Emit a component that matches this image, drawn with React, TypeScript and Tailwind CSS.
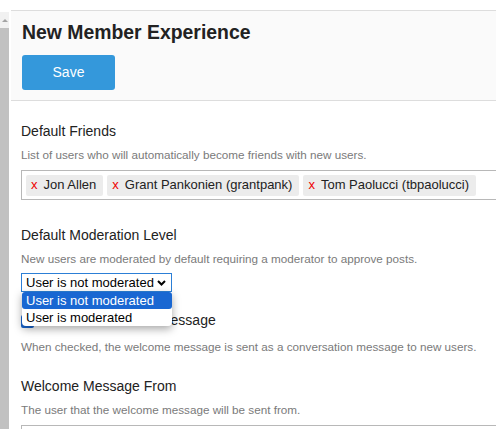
import React from "react";

const friends = ["Jon Allen", "Grant Pankonien (grantpank)", "Tom Paolucci (tbpaolucci)"];

function Heading({ children }: { children: React.ReactNode }) {
  return <div className="text-[14px] leading-[17px] text-[#222]">{children}</div>;
}

function Desc({ children, className = "mt-[8px]" }: { children: React.ReactNode; className?: string }) {
  return (
    <div className={`${className} whitespace-nowrap text-[11.7px] leading-[14px] text-[#7a7a7a]`}>{children}</div>
  );
}

export default function App() {
  return (
    <div className="flex h-[429px] w-[496px] overflow-hidden bg-white font-['Liberation_Sans',Arial,sans-serif]">
      {/* scrollbar */}
      <div className="flex w-[9px] shrink-0 flex-col pt-[12px]">
        <div className="flex h-[16px] items-center justify-center bg-[#f1f1f1]">
          <div className="h-0 w-0 border-x-[3px] border-b-[3px] border-x-transparent border-b-[#a3a3a3]" />
        </div>
        <div className="flex-1 bg-[#c1c1c1]" />
      </div>
      <div className="w-[2px] shrink-0" />

      <div className="min-w-0 flex-1 pt-[10px]">
        <div className="h-[91px] border-y border-[#dddddd] bg-[#fafafa] pl-[11px] pt-[10px]">
          <h1 className="text-[19.4px] font-bold leading-[22px] text-[#222]">New Member Experience</h1>
          <button className="mt-[12px] h-[35px] w-[93px] rounded-[3px] bg-[#3498db] text-[14px] text-white">
            Save
          </button>
        </div>

        <div className="pl-[10px] pt-[22px]">
          <Heading>Default Friends</Heading>
          <Desc>List of users who will automatically become friends with new users.</Desc>
          <div className="mt-[8px] flex h-[30px] w-[520px] items-center gap-[4px] border border-[#b8b8b8] px-[4px]">
            {friends.map((f) => (
              <div
                key={f}
                className="flex h-[21px] shrink-0 items-center gap-[6px] rounded-[2px] bg-[#ececec] pl-[5px] pr-[7px] text-[13px] text-[#222]"
              >
                <span className="text-[#ee0000]">x</span>
                <span>{f}</span>
              </div>
            ))}
          </div>

          <div className="mt-[27px]">
            <Heading>Default Moderation Level</Heading>
          </div>
          <Desc>New users are moderated by default requiring a moderator to approve posts.</Desc>
          <div className="relative mt-[7px] w-[151px]">
            <div className="flex h-[19px] items-center justify-between border border-[#2c7fd6] pl-[4px] pr-[5px] text-[13px] leading-none text-black">
              <span>User is not moderated</span>
              <svg width="9" height="6" viewBox="0 0 9 6">
                <path d="M1 1l3.5 3.5L8 1" fill="none" stroke="#000" strokeWidth="2" />
              </svg>
            </div>
            <div className="absolute left-[1px] top-[19px] z-10 w-[150px] overflow-hidden rounded-b-[4px] bg-white text-[13px] shadow-[0_3px_8px_rgba(0,0,0,0.35)]">
              <div className="flex h-[17px] items-center rounded-[3px] bg-[#1967d2] pl-[4px] text-white">
                User is not moderated
              </div>
              <div className="flex h-[17px] items-center pl-[4px] text-black">User is moderated</div>
            </div>
          </div>

          <div className="mt-[20px] flex items-start gap-[3px]">
            <div className="mt-[3px] h-[13px] w-[13px] shrink-0 rounded-[2px] bg-[#1967d2]" />
            <Heading>Send the Welcome Message</Heading>
          </div>
          <Desc className="mt-[11px]">When checked, the welcome message is sent as a conversation message to new users.</Desc>

          <div className="mt-[24px]">
            <Heading>Welcome Message From</Heading>
          </div>
          <Desc>The user that the welcome message will be sent from.</Desc>
          <div className="mt-[8px] h-[30px] w-[520px] border border-[#b8b8b8]" />
        </div>
      </div>
    </div>
  );
}
